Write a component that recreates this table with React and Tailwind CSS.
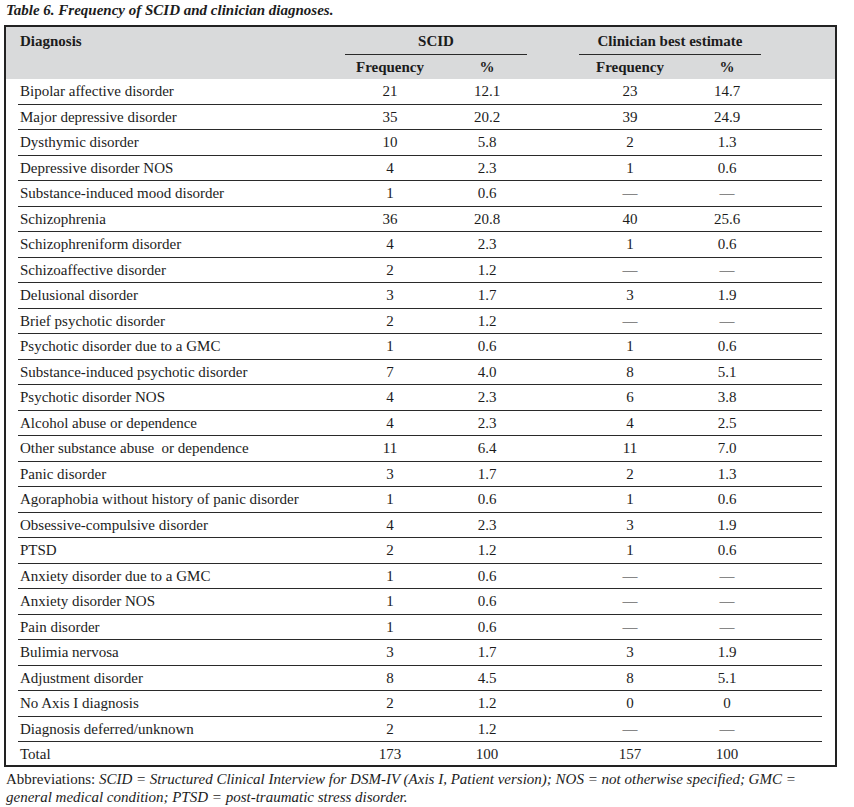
import React from 'react'

const rows = [
  ['Bipolar affective disorder', '21', '12.1', '23', '14.7'],
  ['Major depressive disorder', '35', '20.2', '39', '24.9'],
  ['Dysthymic disorder', '10', '5.8', '2', '1.3'],
  ['Depressive disorder NOS', '4', '2.3', '1', '0.6'],
  ['Substance-induced mood disorder', '1', '0.6', '—', '—'],
  ['Schizophrenia', '36', '20.8', '40', '25.6'],
  ['Schizophreniform disorder', '4', '2.3', '1', '0.6'],
  ['Schizoaffective disorder', '2', '1.2', '—', '—'],
  ['Delusional disorder', '3', '1.7', '3', '1.9'],
  ['Brief psychotic disorder', '2', '1.2', '—', '—'],
  ['Psychotic disorder due to a GMC', '1', '0.6', '1', '0.6'],
  ['Substance-induced psychotic disorder', '7', '4.0', '8', '5.1'],
  ['Psychotic disorder NOS', '4', '2.3', '6', '3.8'],
  ['Alcohol abuse or dependence', '4', '2.3', '4', '2.5'],
  ['Other substance abuse  or dependence', '11', '6.4', '11', '7.0'],
  ['Panic disorder', '3', '1.7', '2', '1.3'],
  ['Agoraphobia without history of panic disorder', '1', '0.6', '1', '0.6'],
  ['Obsessive-compulsive disorder', '4', '2.3', '3', '1.9'],
  ['PTSD', '2', '1.2', '1', '0.6'],
  ['Anxiety disorder due to a GMC', '1', '0.6', '—', '—'],
  ['Anxiety disorder NOS', '1', '0.6', '—', '—'],
  ['Pain disorder', '1', '0.6', '—', '—'],
  ['Bulimia nervosa', '3', '1.7', '3', '1.9'],
  ['Adjustment disorder', '8', '4.5', '8', '5.1'],
  ['No Axis I diagnosis', '2', '1.2', '0', '0'],
  ['Diagnosis deferred/unknown', '2', '1.2', '—', '—'],
]

const cols = 'grid grid-cols-[327px_90px_92px_52px_102px_80px_61px] items-center'

const Row = ({ r, last }) => (
  <div className={`${cols} ${last ? 'h-[23px]' : 'h-[25.5px] border-b border-[#2a2a2a]'}`}>
    <div className="pl-0.5 whitespace-pre">{r[0]}</div>
    <div className="text-center">{r[1]}</div>
    <div className="text-center pl-3">{r[2]}</div>
    <div></div>
    <div className="text-center">{r[3]}</div>
    <div className="text-center pl-3">{r[4]}</div>
    <div></div>
  </div>
)

export default function App() {
  return (
    <div className="w-[854px] h-[807px] bg-white text-[#1c1c1c] font-['Liberation_Serif',serif] text-[15px] leading-[18px]">
      <div className="pl-1.5 h-5 leading-5 font-bold italic text-[15px]">
        Table 6. Frequency of SCID and clinician diagnoses.
      </div>
      <div className="ml-1 mt-[5px] w-[833px] border-2 border-[#222]">
        <div className="bg-[#d9dadb] px-[12px] pr-[13px] h-[52px] font-bold">
          <div className={`${cols} h-[28px]`}>
            <div className="pl-0.5 self-center">Diagnosis</div>
            <div className="col-span-2 h-full flex items-center justify-center border-b border-[#2a2a2a]">SCID</div>
            <div></div>
            <div className="col-span-2 h-full flex items-center justify-center border-b border-[#2a2a2a]">Clinician best estimate</div>
            <div></div>
          </div>
          <div className={`${cols} h-[24px]`}>
            <div></div>
            <div className="text-center">Frequency</div>
            <div className="text-center pl-3">%</div>
            <div></div>
            <div className="text-center">Frequency</div>
            <div className="text-center pl-3">%</div>
            <div></div>
          </div>
        </div>
        <div className="pl-[12px] pr-[13px]">
          {rows.map((r, i) => (
            <Row key={i} r={r} />
          ))}
          <Row r={['Total', '173', '100', '157', '100']} last />
        </div>
      </div>
      <div className="mt-[3px] pl-1.5 pr-4">
        Abbreviations: <span className="italic">SCID = Structured Clinical Interview for DSM-IV (Axis I, Patient version); NOS = not otherwise specified; GMC =</span>
        <br />
        <span className="italic">general medical condition; PTSD = post-traumatic stress disorder.</span>
      </div>
    </div>
  )
}
